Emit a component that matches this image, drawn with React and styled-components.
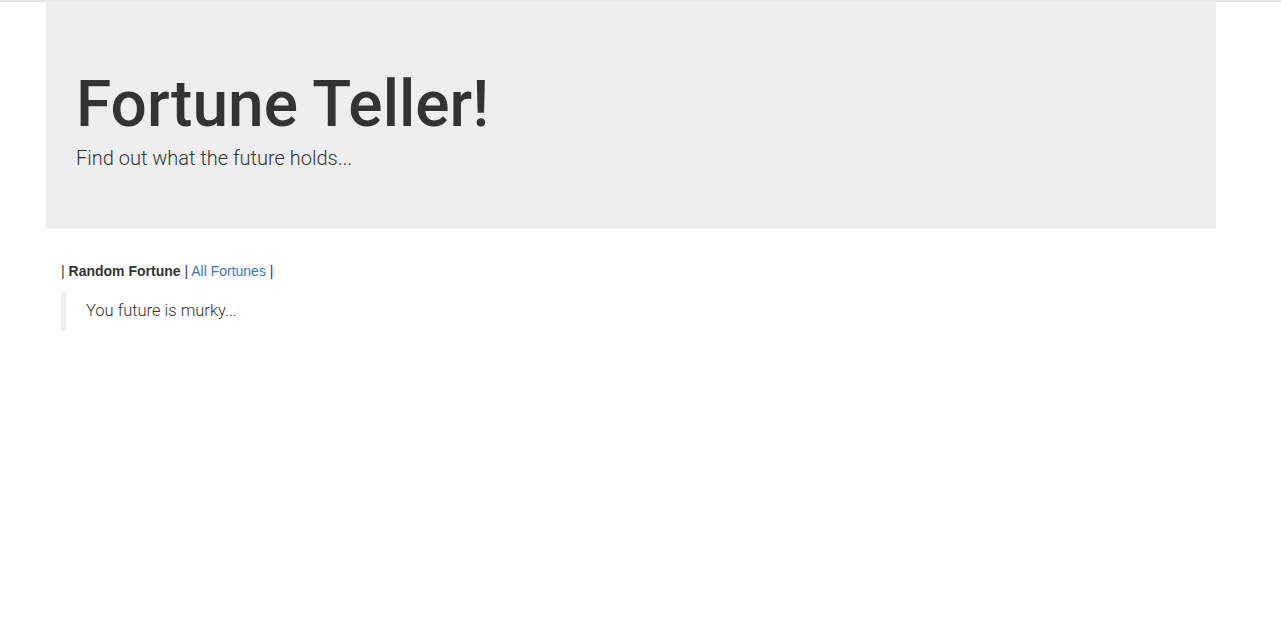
import React from "react";
import styled, { createGlobalStyle } from "styled-components";

const Global = createGlobalStyle`
  html, body { margin: 0; padding: 0; background: #fff; }
  body {
    font-family: "Liberation Sans", Arial, sans-serif;
    font-size: 14px;
    line-height: 1.42857;
    color: #333;
    border-top: 2px solid #e6e6e6;
  }
`;

const Page = styled.div`
  width: 1170px;
  margin-left: 46px;
`;

const Jumbotron = styled.header`
  background: #eee;
  height: 227px;
  box-sizing: border-box;
  padding: 68px 30px 0 30px;
`;

const Title = styled.h1`
  margin: 0;
  font-family: Roboto, "Liberation Sans", sans-serif;
  font-size: 64px;
  font-weight: 500;
  line-height: 1.1;
  color: #333;
  letter-spacing: 0;
`;

const Lead = styled.p`
  margin: 4px 0 0;
  font-family: Roboto, "Liberation Sans", sans-serif;
  font-size: 20px;
  font-weight: 300;
  line-height: 1.4;
  color: #333;
`;

const Main = styled.main`
  padding: 32px 15px 0;
`;

const Nav = styled.nav`
  font-size: 14px;
  line-height: 20px;
  color: #333;
`;

const Current = styled.strong`
  font-weight: 700;
`;

const NavLink = styled.a`
  color: #337ab7;
  text-decoration: none;
`;

const Quote = styled.blockquote`
  margin: 10px 0 0;
  padding: 10px 20px;
  border-left: 5px solid #eee;
  font-family: Roboto, "Liberation Sans", sans-serif;
  font-size: 16.5px;
  font-weight: 300;
  line-height: 20px;
`;

export default function App() {
  return (
    <>
      <Global />
      <Page>
        <Jumbotron>
          <Title>Fortune Teller!</Title>
          <Lead>Find out what the future holds...</Lead>
        </Jumbotron>
        <Main>
          <Nav>
            | <Current>Random Fortune</Current> | <NavLink href="#">All Fortunes</NavLink> |
          </Nav>
          <Quote>You future is murky...</Quote>
        </Main>
      </Page>
    </>
  );
}
